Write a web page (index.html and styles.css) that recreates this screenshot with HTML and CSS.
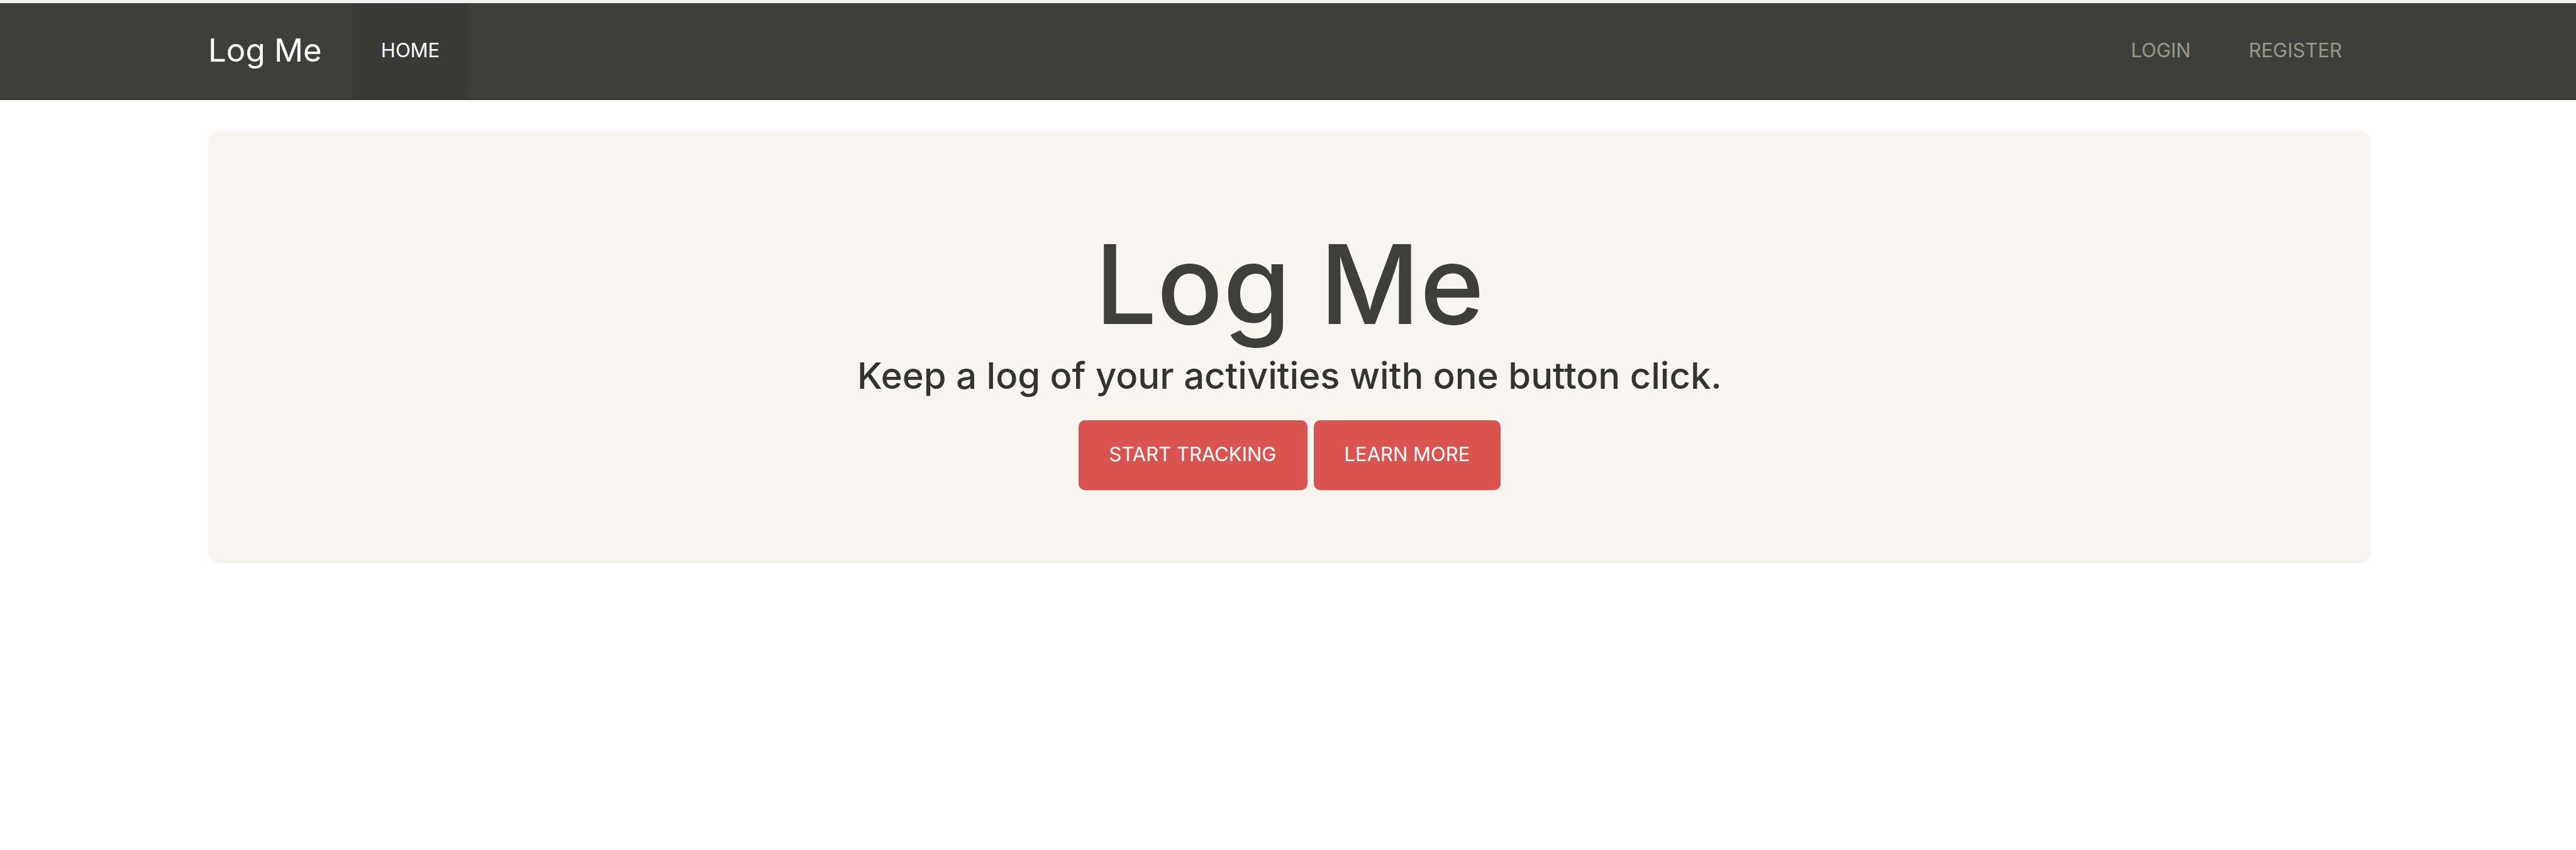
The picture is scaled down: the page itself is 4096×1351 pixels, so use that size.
FILE: index.html
```html
<!DOCTYPE html>
<html lang="en">
<head>
<meta charset="utf-8">
<title>Log Me</title>
<link rel="stylesheet" href="styles.css">
</head>
<body>
<header class="navbar">
  <a class="brand" href="#">Log Me</a>
  <nav class="nav">
    <a class="nav-link active" href="#">HOME</a>
    <div class="account">
      <a class="nav-link" href="#">LOGIN</a>
      <a class="nav-link" href="#">REGISTER</a>
    </div>
  </nav>
</header>
<main class="page">
  <section class="hero">
    <h1 class="title">Log Me</h1>
    <p class="lead">Keep a log of your activities with one button click.</p>
    <div class="actions">
      <button class="btn" type="button">START TRACKING</button>
      <button class="btn" type="button">LEARN MORE</button>
    </div>
  </section>
</main>
</body>
</html>
```
FILE: styles.css
```css
* {
  box-sizing: border-box;
}

body {
  margin: 0;
  background: #fff;
  color: #3e3f3a;
  font-family: Inter, Roboto, sans-serif;
}

.navbar {
  display: flex;
  align-items: stretch;
  height: 159px;
  padding: 0 326px 0 331px;
  background: #3e3f3a;
  border-top: 5px solid #f0f0f0;
  border-bottom: 2px solid #33342f;
}

.brand {
  display: flex;
  align-items: center;
  padding: 0 48px 4px 0;
  color: #fff;
  font-size: 51px;
  text-decoration: none;
}

.nav {
  display: flex;
  flex: 1;
  justify-content: space-between;
}

.account {
  display: flex;
}

.nav-link {
  display: flex;
  align-items: center;
  padding: 0 46px 4px;
  color: #98978b;
  font-size: 31px;
  text-decoration: none;
}

.nav-link.active {
  background: #393a35;
  color: #fff;
}

.page {
  padding: 49px 326px 0 331px;
}

.hero {
  padding: 154px 48px 116px;
  border-radius: 16px;
  background: #f8f5f0;
  text-align: center;
}

.title {
  margin: 0;
  font-size: 174px;
  font-weight: 500;
  line-height: 180px;
}

.lead {
  margin: 20px 0 36px;
  color: #33342f;
  font-size: 58px;
  font-weight: 500;
  line-height: 70px;
}

.actions {
  display: flex;
  justify-content: center;
  gap: 10px;
}

.btn {
  height: 111px;
  padding: 0 49px 4px;
  border: 0;
  border-radius: 10px;
  background: #d9534f;
  color: #fff;
  font-family: inherit;
  font-size: 31px;
}
```
